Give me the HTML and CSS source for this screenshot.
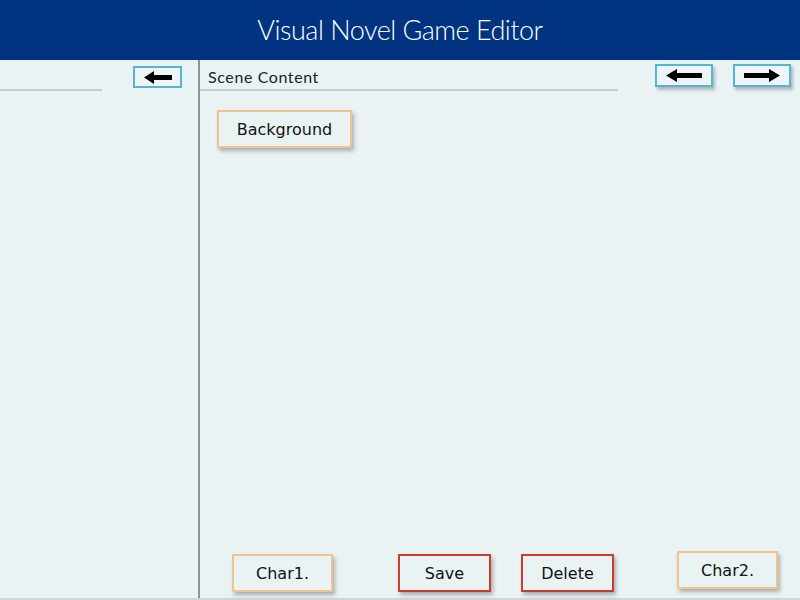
FILE: index.html
```html
<!DOCTYPE html>
<html>
<head>
<meta charset="utf-8">
<link rel="stylesheet" href="styles.css">
</head>
<body>
<header class="top">
  <h1 class="title">Visual Novel Game Editor</h1>
</header>
<main class="main">
  <aside class="side">
    <div class="side-head">
      <button class="arrow-btn small"><svg width="28" height="13" viewBox="0 0 28 13"><path d="M0 6.5 L10 0 L10 4 L28 4 L28 9 L10 9 L10 13 Z" fill="#000"/></svg></button>
    </div>
    <div class="side-line"></div>
  </aside>
  <section class="scene">
    <div class="scene-head">
      <span class="scene-title">Scene Content</span>
      <div class="nav">
        <button class="arrow-btn"><svg width="36" height="13" viewBox="0 0 36 13"><path d="M0 6.5 L11 0 L11 4 L36 4 L36 9 L11 9 L11 13 Z" fill="#000"/></svg></button>
        <button class="arrow-btn"><svg width="36" height="13" viewBox="0 0 36 13"><path d="M36 6.5 L25 0 L25 4 L0 4 L0 9 L25 9 L25 13 Z" fill="#000"/></svg></button>
      </div>
    </div>
    <div class="scene-body">
      <button class="btn orange bg-btn">Background</button>
      <div class="bottom-row">
        <button class="btn orange char1">Char1.</button>
        <button class="btn red save">Save</button>
        <button class="btn red del">Delete</button>
        <button class="btn orange char2">Char2.</button>
      </div>
    </div>
  </section>
</main>
</body>
</html>
```
FILE: styles.css
```css
* { box-sizing: border-box; }
html, body { margin: 0; padding: 0; }
body {
  width: 800px;
  height: 600px;
  background: #eaf3f4;
  font-family: "DejaVu Sans", Verdana, sans-serif;
  overflow: hidden;
}
.top {
  height: 60px;
  background: #003380;
  display: flex;
  align-items: center;
  justify-content: center;
}
.title {
  margin: 0;
  color: #fff;
  font-family: "Lato", sans-serif;
  font-weight: 300;
  font-size: 27px;
  letter-spacing: -0.5px;
  padding-bottom: 2px;
}
.main {
  display: flex;
  height: 540px;
  border-bottom: 2px solid #cfd6d8;
}
.side {
  width: 200px;
  border-right: 2px solid #8e9496;
  display: flex;
  flex-direction: column;
}
.side-head {
  height: 29px;
  display: flex;
  justify-content: flex-end;
  align-items: flex-start;
  padding-top: 6px;
  padding-right: 16px;
}
.side-line {
  width: 102px;
  height: 2px;
  background: #c6cccd;
}
.arrow-btn {
  background: #eef5f6;
  border: 2px solid #58b3d8;
  padding: 0;
  display: flex;
  align-items: center;
  justify-content: center;
  width: 58px;
  height: 23px;
  box-shadow: 2px 3px 3px rgba(0,0,0,0.25);
}
.arrow-btn.small {
  width: 49px;
  height: 22px;
  box-shadow: none;
}
.scene {
  flex: 1;
  display: flex;
  flex-direction: column;
}
.scene-head {
  height: 31px;
  display: flex;
  justify-content: space-between;
  align-items: flex-start;
  border-bottom: 2px solid #c6cccd;
  margin-right: 182px;
  position: relative;
}
.scene-title {
  font-family: "Lato", sans-serif;
  font-size: 16px;
  letter-spacing: 0.6px;
  color: #222;
  margin-left: 8px;
  margin-top: 7px;
}
.nav {
  position: absolute;
  right: -173px;
  top: 4px;
  display: flex;
  gap: 20px;
}
.scene-body {
  flex: 1;
  display: flex;
  flex-direction: column;
  justify-content: space-between;
  padding: 19px 0 6px 0;
}
.btn {
  background: #eaf3f4;
  font-family: "DejaVu Sans", Verdana, sans-serif;
  font-size: 16px;
  color: #111;
  padding: 0;
  height: 38px;
  box-shadow: 2px 3px 4px rgba(0,0,0,0.28);
}
.orange { border: 2px solid #f1c28e; }
.red { border: 2px solid #cf3a2a; }
.bg-btn {
  align-self: flex-start;
  margin-left: 17px;
  width: 135px;
}
.bottom-row {
  display: flex;
  align-items: flex-end;
}
.char1 { width: 101px; margin-left: 32px; }
.save { width: 93px; margin-left: 65px; }
.del { width: 93px; margin-left: 30px; }
.char2 { width: 101px; margin-left: 63px; margin-bottom: 3px; }
```
